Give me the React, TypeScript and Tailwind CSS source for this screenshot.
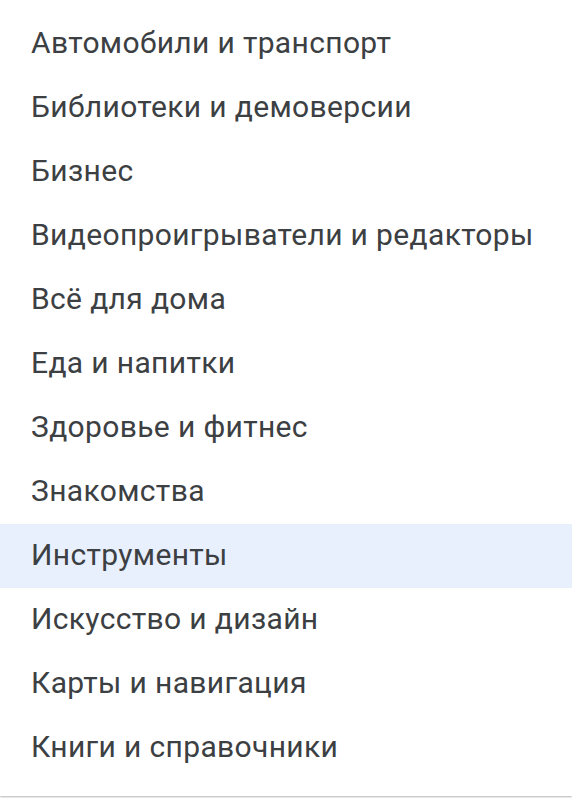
import React from "react";

const items = [
  "Автомобили и транспорт",
  "Библиотеки и демоверсии",
  "Бизнес",
  "Видеопроигрыватели и редакторы",
  "Всё для дома",
  "Еда и напитки",
  "Здоровье и фитнес",
  "Знакомства",
  "Инструменты",
  "Искусство и дизайн",
  "Карты и навигация",
  "Книги и справочники",
];

export default function App() {
  return (
    <div className="w-[572px] h-[798px] bg-white overflow-hidden">
      <div
        className="h-[796px] bg-white pt-3 shadow-[0_1px_2px_rgba(0,0,0,0.3)]"
        style={{ fontFamily: "Roboto, 'Noto Sans', sans-serif" }}
      >
        {items.map((t, i) => (
          <div
            key={t}
            className={`h-16 flex items-center pl-[31px] pb-[3px] text-[30px] tracking-[0.35px] text-[#3c4043] ${
              i === 8 ? "bg-[#e8f0fe]" : ""
            }`}
          >
            {t}
          </div>
        ))}
      </div>
    </div>
  );
}
